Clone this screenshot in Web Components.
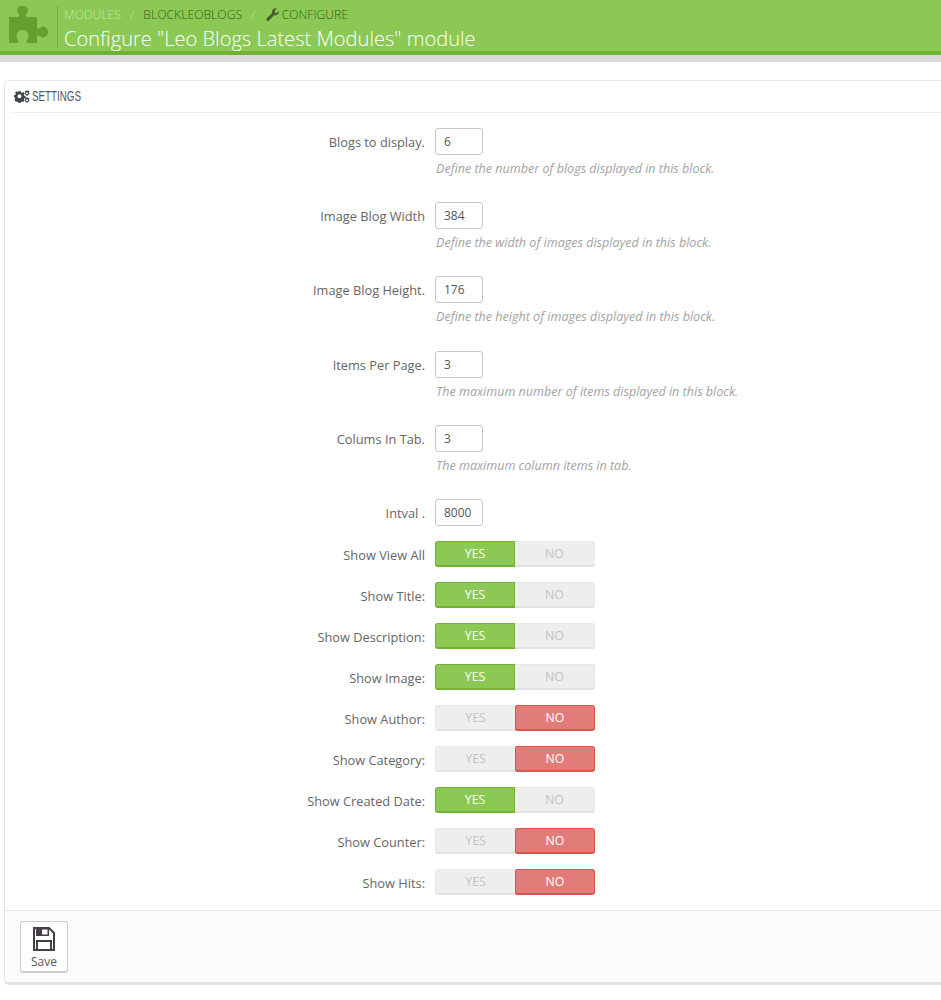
<!DOCTYPE html>
<html>
<head>
<meta charset="utf-8">
<title>Configure module</title>
<style>
  html, body { margin: 0; padding: 0; background: #fff; overflow: hidden; height: 1000px; }
  body { font-family: "Open Sans", "Liberation Sans", sans-serif; font-size: 12px; color: #666; }
</style>
</head>
<body>

<page-head>
  <span slot="title">Configure "Leo Blogs Latest Modules" module</span>
</page-head>

<settings-panel>
  <text-field label="Blogs to display." value="6" help="Define the number of blogs displayed in this block."></text-field>
  <text-field label="Image Blog Width" value="384" help="Define the width of images displayed in this block."></text-field>
  <text-field label="Image Blog Height." value="176" help="Define the height of images displayed in this block."></text-field>
  <text-field label="Items Per Page." value="3" help="The maximum number of items displayed in this block."></text-field>
  <text-field label="Colums In Tab." value="3" help="The maximum column items in tab."></text-field>
  <text-field label="Intval ." value="8000"></text-field>
  <switch-field label="Show View All" on="yes"></switch-field>
  <switch-field label="Show Title:" on="yes"></switch-field>
  <switch-field label="Show Description:" on="yes"></switch-field>
  <switch-field label="Show Image:" on="yes"></switch-field>
  <switch-field label="Show Author:" on="no"></switch-field>
  <switch-field label="Show Category:" on="no"></switch-field>
  <switch-field label="Show Created Date:" on="yes"></switch-field>
  <switch-field label="Show Counter:" on="no"></switch-field>
  <switch-field label="Show Hits:" on="no"></switch-field>
</settings-panel>

<script>
  // Top green bar with breadcrumb and page title
  class PageHead extends HTMLElement {
    constructor() {
      super();
      const shadow = this.attachShadow({ mode: "open" });
      shadow.innerHTML = `
        <style>
          :host { display: block; background: #8bc954; border-bottom: 4px solid #72b133; box-shadow: 0 7px 0 #d9d9d9; height: 51px; }
          .wrap { display: flex; height: 51px; box-sizing: border-box; }
          .logo { width: 57px; height: 48px; flex: none; box-sizing: border-box; padding: 6px 0 0 9px; }
          .logo svg { display: block; }
          .text { border-left: 1px solid #72b133; margin-top: 6px; height: 42px; padding-left: 6px; }
          .crumbs { font-size: 12.2px; font-weight: 300; line-height: 17px; height: 17px; display: flex; text-transform: uppercase; color: #3f5a1e; white-space: nowrap; }
          .crumbs .first { color: #c4e6a0; }
          .crumbs .sep { color: #a9d97c; font-weight: 400; margin: 0 9px 0 9px; }
          .crumbs svg { margin: 2px 3px 0 1px; }
          h2 { margin: 4px 0 0; font-weight: 300; font-size: 20.1px; line-height: 24px; color: #fff; white-space: nowrap; }
        </style>
        <div class="wrap">
          <div class="logo">
            <svg width="39" height="37" viewBox="0 0 39 37">
              <path fill="#659f2f" d="M0 11H9C10 11 11 10 10 8.500C8.500 6.500 8 5 8 4C8 1.500 10.500 0 13.500 0S19 1.500 19 4C19 5.500 18 7 17 8.500C16 10 17 11 18 11H28V21C28 22.500 29.500 23 31 22C32 21 33 20.500 34 20.500C37 20.500 39 23 39 26S37 31.500 34 31.500C33 31.500 32 31 31 30C29.500 29 28 29.500 28 31V37H19C17.500 37 17 35.500 18 34C19 33 19.500 31 19.500 29.500C19.500 26.500 17 24 13.500 24S7.500 26.500 7.500 29.500C7.500 31 8 33 9 34C10 35.500 9.500 37 8 37H0Z"/>
            </svg>
          </div>
          <div class="text">
            <div class="crumbs">
              <span class="first">Modules</span><span class="sep">/</span><span>blockleoblogs</span><span class="sep">/</span>
              <svg width="13" height="13" viewBox="0 0 13 13"><path fill="#4a5a32" d="M1 12.500c-1-1-1-1.500-.2-2.300L6 5.200C5.400 3 6.800.5 9.500.3c.6 0 1.100.1 1.500.3L8.700 2.800l.3 1.800 1.700.4L13 2.700c.3 2.800-2 5-5 4.600l-5 5.100c-.7.700-1.300.8-2 .1z"/></svg>
              <span>Configure</span>
            </div>
            <h2><slot name="title"></slot></h2>
          </div>
        </div>`;
    }
  }
  customElements.define("page-head", PageHead);

  // White panel that holds the form rows and the save footer
  class SettingsPanel extends HTMLElement {
    constructor() {
      super();
      const shadow = this.attachShadow({ mode: "open" });
      shadow.innerHTML = `
        <style>
          :host { display: block; margin: 25px -12px 0 4px; background: #fff; border: 1px solid #e6e6e6; border-bottom: 3px solid #e3e3e3; border-radius: 5px; box-sizing: border-box; }
          header { margin: 0 0 0 5px; height: 31px; border-bottom: 1px solid #eee; display: flex; align-items: center; padding-left: 4px; color: #555; }
          header span { display: inline-block; font-family: "Liberation Sans", sans-serif; font-size: 14px; line-height: 14px; margin-top: -2px; transform: scaleX(.7); transform-origin: left center; text-transform: uppercase; margin-left: 2px; color: #4d5a66; }
          .rows { padding-top: 15px; height: 797px; box-sizing: border-box; }
          footer { height: 72px; background: #fbfcfe; border-top: 1px solid #e6e6e6; box-sizing: border-box; padding: 10px 15px; border-radius: 0 0 5px 5px; }
          .save { width: 48px; height: 52px; box-sizing: border-box; background: #fff; border: 1px solid #ccc; border-bottom-width: 2px; border-radius: 3px; display: flex; flex-direction: column; align-items: center; padding-top: 5px; font-size: 12px; color: #555; line-height: 14px; }
          .save svg { display: block; margin-bottom: 4px; }
        </style>
        <header>
          <svg width="16" height="13" viewBox="0 0 16 13">
            <g fill="#3f4449">
              <path fill-rule="evenodd" d="M4.500 1.500h2l.3 1.300 1.100.5 1.200-.7 1.400 1.400-.7 1.200.5 1.100 1.300.3v2l-1.300.3-.5 1.100.7 1.200-1.400 1.400-1.200-.7-1.100.5-.3 1.300h-2l-.3-1.300-1.100-.5-1.200.7L.500 10.300l.7-1.200-.5-1.100L0 7.700v-2l1.300-.3.5-1.100-.7-1.200 1.400-1.400 1.200.7 1.100-.5zM5.500 4.800a2 2 0 100 4 2 2 0 000-4z" transform="translate(0 -.5)"/>
              <path fill-rule="evenodd" d="M13.300 0l.5 1 1-.3.6.9-.6.9.8.9-.4 1-1.100.2-.4 1.100h-1.200l-.4-1-1.100-.3-.3-1 .7-.8-.5-1 .7-.8 1 .3.3-1.100zM13 2.300a1 1 0 100 2 1 1 0 000-2z"/>
              <path fill-rule="evenodd" d="M13.300 7l.5 1 1-.3.6.9-.6.9.8.9-.4 1-1.100.2-.4 1.100h-1.200l-.4-1-1.100-.3-.3-1 .7-.8-.5-1 .7-.8 1 .3.3-1.100zM13 9.300a1 1 0 100 2 1 1 0 000-2z"/>
            </g>
          </svg>
          <span>Settings</span>
        </header>
        <div class="rows"><slot></slot></div>
        <footer>
          <div class="save">
            <svg width="24" height="24" viewBox="0 0 24 24">
              <path fill="none" stroke="#433f44" stroke-width="2" d="M2 1h15l5 5v17H2z"/>
              <path fill="#433f44" d="M4 1h6v8H4zM10 1h7v1.500h-7zM15.500 2h1.500v7h-7V7.500h5.500z"/>
              <path fill="none" stroke="#433f44" stroke-width="2" d="M5 24V14h14v10"/>
            </svg>
            Save
          </div>
        </footer>`;
    }
  }
  customElements.define("settings-panel", SettingsPanel);

  // Shared row styles for label + control
  const rowStyle = `
    .row { display: grid; grid-template-columns: 420px 1fr; column-gap: 10px; }
    label { text-align: right; font-size: 12.8px; color: #666; white-space: nowrap; }
  `;

  // Label, short text input, and optional help line
  class TextField extends HTMLElement {
    connectedCallback() {
      if (this.shadowRoot) { return; }
      const shadow = this.attachShadow({ mode: "open" });
      const help = this.getAttribute("help");
      shadow.innerHTML = `
        <style>
          :host { display: block; height: ${help ? "74.2px" : "42px"}; }
          ${rowStyle}
          label { line-height: 28px; }
          .box { width: 48px; height: 27px; box-sizing: border-box; border: 1px solid #c8c8c8; border-radius: 3px; line-height: 25px; padding-left: 8px; font-size: 12px; color: #555; }
          .help { margin: 6px 0 0 1px; font-size: 12.55px; font-style: italic; color: #a3a3a3; line-height: 16px; white-space: nowrap; }
        </style>
        <div class="row">
          <label>${this.getAttribute("label")}</label>
          <div>
            <div class="box">${this.getAttribute("value")}</div>
            ${help ? `<div class="help">${help}</div>` : ""}
          </div>
        </div>`;
    }
  }
  customElements.define("text-field", TextField);

  // Label and a YES/NO pair of buttons
  class SwitchField extends HTMLElement {
    connectedCallback() {
      if (this.shadowRoot) { return; }
      const shadow = this.attachShadow({ mode: "open" });
      const on = this.getAttribute("on");
      shadow.innerHTML = `
        <style>
          :host { display: block; height: 41px; }
          ${rowStyle}
          label { line-height: 28px; }
          .sw { display: flex; width: 160px; height: 26px; }
          .sw div { flex: 0 0 80px; text-align: center; line-height: 23px; font-size: 12.3px; box-sizing: border-box; background: #eee; color: #c3c3c3; border: 1px solid #e8e8e8; border-bottom: 2px solid #e2e2e2; }
          .sw div:first-child { border-radius: 3px 0 0 3px; border-right: 0; }
          .sw div:last-child { border-radius: 0 3px 3px 0; border-left: 0; }
          .sw .yes.active { background: #8bc954; color: #fff; border: 1px solid #72b133; border-bottom-width: 2px; }
          .sw .no.active { background: #e27c79; color: #fff; border: 1px solid #d9534f; border-bottom-width: 2px; border-radius: 2px 3px 3px 2px; }
        </style>
        <div class="row">
          <label>${this.getAttribute("label")}</label>
          <div class="sw">
            <div class="yes ${on === "yes" ? "active" : ""}">YES</div>
            <div class="no ${on === "no" ? "active" : ""}">NO</div>
          </div>
        </div>`;
    }
  }
  customElements.define("switch-field", SwitchField);
</script>
</body>
</html>
